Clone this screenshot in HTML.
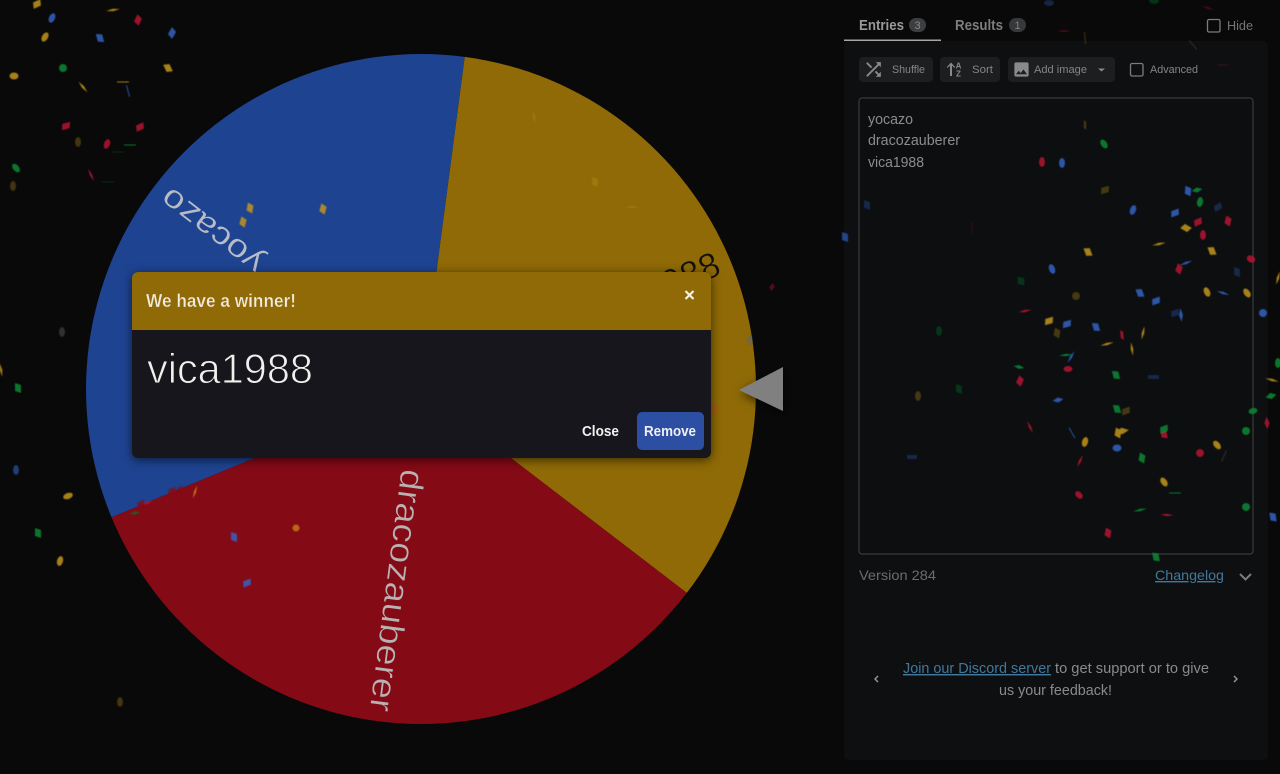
<!DOCTYPE html>
<html lang="en"><head><meta charset="utf-8"><title>Wheel winner</title>
<style>
html,body{margin:0;padding:0;background:#090909;width:1280px;height:774px;overflow:hidden}
svg{display:block;position:absolute;left:0;top:0}
text{font-family:"Liberation Sans",sans-serif}
</style></head><body>
<svg width="1280" height="774" viewBox="0 0 1280 774" xmlns="http://www.w3.org/2000/svg">
<defs>
<polygon id="p" points="-3,-5 3,-3 3,5 -3,3"/>
<ellipse id="e" rx="3" ry="5"/>
<circle id="c" r="4"/>
<polygon id="t" points="-7,0 0,-1.3 7,0 0,1.3"/>
<rect id="h" x="-6" y="-.5" width="12" height="1"/>
<filter id="sh" x="-10%" y="-10%" width="120%" height="125%"><feDropShadow dx="0" dy="2" stdDeviation="5" flood-color="#000" flood-opacity=".6"/></filter>
<filter id="ps" x="-50%" y="-50%" width="200%" height="200%"><feDropShadow dx="2" dy="3" stdDeviation="5" flood-color="#000" flood-opacity=".7"/></filter>
<filter id="soft" x="0" y="0" width="100%" height="100%"><feGaussianBlur stdDeviation=".45"/></filter>
</defs>
<rect width="1280" height="774" fill="#090909"/>
<!-- wheel -->
<path d="M421 389L464.7 56.9A335 335 0 0 1 686.8 592.9Z" fill="#8f6a06"/>
<path d="M421 389L686.8 592.9A335 335 0 0 1 111.5 517.2Z" fill="#840a16"/>
<path d="M421 389L111.5 517.2A335 335 0 0 1 464.7 56.9Z" fill="#1e4391"/>
<text transform="translate(421 389) rotate(97.5)" x="325" y="9" font-size="34" text-anchor="end" fill="#b8b2b2" stroke="#840a16" stroke-width=".5" textLength="244" lengthAdjust="spacingAndGlyphs">dracozauberer</text>
<text transform="translate(421 389) rotate(217.5)" x="322" y="8.500" font-size="32" text-anchor="end" fill="#b8bcc6" stroke="#1e4391" stroke-width=".3" textLength="120" lengthAdjust="spacingAndGlyphs">yocazo</text>
<text transform="translate(421 389) rotate(-22.5)" x="323" y="9" font-size="36" text-anchor="end" fill="#111" stroke="#8f6a06" stroke-width=".5" textLength="142" lengthAdjust="spacingAndGlyphs">vica1988</text>
<path d="M739 390L783 367V411Z" fill="#808080" filter="url(#ps)"/>
<!-- side panel -->
<rect x="844" y="41" width="424" height="719" rx="5" fill="#0d0f11"/>
<rect x="844" y="39.500" width="97" height="1.500" fill="#a8a8a8"/>
<g font-weight="700" font-size="14.500" fill="#8f8f8f">
<text x="859" y="30" textLength="45" lengthAdjust="spacingAndGlyphs" fill="#999">Entries</text>
<text x="955" y="30" textLength="48" lengthAdjust="spacingAndGlyphs" fill="#7e7e7e">Results</text>
</g>
<rect x="909" y="18" width="17" height="14" rx="7" fill="#3c3f41"/>
<rect x="1009" y="18" width="17" height="14" rx="7" fill="#36393b"/>
<text x="917.500" y="29" font-size="11" fill="#8a8a8a" text-anchor="middle">3</text>
<text x="1017.500" y="29" font-size="11" fill="#808080" text-anchor="middle">1</text>
<rect x="1207.500" y="19.500" width="12.500" height="12.500" rx="1.500" fill="none" stroke="#7c7c7c" stroke-width="1.300"/>
<text x="1227" y="30" font-size="13" fill="#767676" textLength="26" lengthAdjust="spacingAndGlyphs">Hide</text>
<!-- buttons -->
<rect x="859" y="57" width="74" height="25" rx="4" fill="#1c1e20"/>
<rect x="940" y="57" width="60" height="25" rx="4" fill="#1c1e20"/>
<rect x="1008" y="57" width="107" height="25" rx="4" fill="#1c1e20"/>
<g fill="#8a8a8a">
<svg x="862.500" y="58.500" width="22" height="22" viewBox="0 0 24 24"><path fill="#8a8a8a" d="M10.590 9.170L5.410 4 4 5.410l5.170 5.170 1.420-1.410zM14.500 4l2.040 2.040L4 18.590 5.410 20 17.960 7.460 20 9.500V4h-5.500zm.33 9.410l-1.410 1.410 3.130 3.130L14.500 20H20v-5.500l-2.040 2.040-3.130-3.130z"/></svg>
<path d="M950 76V65.500L947.500 68 947 67l4-4.500 4 4.500-.6 1-2.400-2.500V76z"/>
<text x="958.500" y="68.500" font-size="8" font-weight="700" text-anchor="middle">A</text>
<text x="958.500" y="76.500" font-size="8" font-weight="700" text-anchor="middle">Z</text>
<svg x="1012" y="60" width="19" height="19" viewBox="0 0 24 24"><path fill="#8a8a8a" d="M21 19V5c0-1.100-.9-2-2-2H5c-1.100 0-2 .9-2 2v14c0 1.100.9 2 2 2h14c1.100 0 2-.9 2-2zM8.500 13.500l2.500 3.010L14.500 12l4.500 6H5l3.500-4.500z"/></svg>
<path d="M1098 68.500h7l-3.500 3z"/>
</g>
<g font-size="11" fill="#858585">
<text x="892" y="73" textLength="33" lengthAdjust="spacingAndGlyphs">Shuffle</text>
<text x="972" y="73" textLength="21" lengthAdjust="spacingAndGlyphs">Sort</text>
<text x="1034" y="73" textLength="53" lengthAdjust="spacingAndGlyphs">Add image</text>
<text x="1150" y="73" textLength="48" lengthAdjust="spacingAndGlyphs">Advanced</text>
</g>
<rect x="1130.500" y="63.500" width="12.500" height="12.500" rx="1.500" fill="none" stroke="#7c7c7c" stroke-width="1.300"/>
<!-- textarea -->
<rect x="859" y="98" width="394" height="456" rx="3" fill="#0c0e10" stroke="#434446"/>
<g font-size="14.500" fill="#8c8c8c">
<text x="868" y="124" textLength="45" lengthAdjust="spacingAndGlyphs">yocazo</text>
<text x="868" y="145" textLength="92" lengthAdjust="spacingAndGlyphs">dracozauberer</text>
<text x="868" y="167" textLength="56" lengthAdjust="spacingAndGlyphs">vica1988</text>
</g>
<!-- footer -->
<text x="859" y="580" font-size="14" fill="#6c6c6c" textLength="77" lengthAdjust="spacingAndGlyphs">Version 284</text>
<text x="1155" y="580" font-size="14" fill="#42789c" textLength="69" lengthAdjust="spacingAndGlyphs" text-decoration="underline">Changelog</text>
<path d="M1240 574l5.500 5.500 5.500-5.500" fill="none" stroke="#7c7c7c" stroke-width="2"/>
<g font-size="14.500">
<text x="903" y="673" fill="#42789c" textLength="148" lengthAdjust="spacingAndGlyphs" text-decoration="underline">Join our Discord server</text>
<text x="1055" y="673" fill="#8a8a8a" textLength="154" lengthAdjust="spacingAndGlyphs">to get support or to give</text>
<text x="999" y="695" fill="#8a8a8a" textLength="113" lengthAdjust="spacingAndGlyphs">us your feedback!</text>
</g>
<path d="M878 676l-3 3 3 3M1234 676l3 3-3 3" fill="none" stroke="#9a9a9a" stroke-width="1.400"/>
<!-- confetti -->
<g filter="url(#soft)" opacity=".85">
<g fill="#c4961c">
<use href="#p" transform="translate(1186 228) rotate(-60)"/><use href="#t" transform="translate(1159 244) rotate(-12)"/><use href="#p" transform="translate(1212 251) rotate(-20)"/><use href="#p" transform="translate(1088 252) rotate(-20)"/><use href="#e" transform="translate(1207 292) rotate(-25)"/><use href="#e" transform="translate(1247 293) rotate(-35)"/><use href="#p" transform="translate(1049 321) rotate(75)"/><use href="#t" transform="translate(1143 333) rotate(-78)"/><use href="#t" transform="translate(1107 344) rotate(-14)"/><use href="#t" transform="translate(1132 349) rotate(82)"/><use href="#t" transform="translate(1278 278) rotate(-75)"/><use href="#t" transform="translate(1272 380) rotate(15)"/><use href="#e" transform="translate(1085 442) rotate(15)"/><use href="#t" transform="translate(1122 431) rotate(-8) scale(1 2.500)"/><use href="#p" transform="translate(1118 433) rotate(10)"/><use href="#e" transform="translate(1217 445) rotate(-40)"/><use href="#e" transform="translate(1164 482) rotate(-35)"/>
<use href="#p" transform="translate(37 4) rotate(65)"/><use href="#e" transform="translate(45 37) rotate(30)"/><use href="#t" transform="translate(113 10) rotate(-8)"/><use href="#p" transform="translate(168 68) rotate(-25)"/><ellipse cx="14" cy="76" rx="4.500" ry="3.500"/><use href="#t" transform="translate(83 87) rotate(50)"/><use href="#h" transform="translate(123 82)"/><use href="#p" transform="translate(250 208) rotate(10)"/><use href="#p" transform="translate(243 222) rotate(15)"/><use href="#p" transform="translate(323 209) rotate(15)"/><circle cx="296" cy="528" r="3.500" fill="#c47a18"/><use href="#t" transform="translate(195 492) rotate(-72)" fill="#c47a18"/><use href="#e" transform="translate(60 561) rotate(15)"/><use href="#e" transform="translate(68 496) rotate(70)"/><use href="#p" transform="translate(714 409) rotate(10)" fill="#a55a18"/><use href="#t" transform="translate(1 370) rotate(80)"/>
</g>
<g fill="#3563c4">
<use href="#p" transform="translate(1188 191) rotate(5)"/><use href="#e" transform="translate(1133 210) rotate(20)"/><use href="#p" transform="translate(1175 213) rotate(70)"/><use href="#t" transform="translate(1186 263) rotate(-20)"/><use href="#e" transform="translate(1052 269) rotate(-20)"/><use href="#p" transform="translate(1140 293) rotate(-20)"/><use href="#t" transform="translate(1223 293) rotate(18)"/><use href="#p" transform="translate(1156 301) rotate(70)"/><use href="#t" transform="translate(1181 315) rotate(85) scale(1 1.500)"/><use href="#c" x="1263" y="313"/><use href="#p" transform="translate(1067 324) rotate(75)"/><use href="#p" transform="translate(1096 327) rotate(-15)"/><use href="#t" transform="translate(1071 357) rotate(-60)"/><use href="#t" transform="translate(1058 400) rotate(-10) scale(.8 2)"/><use href="#h" transform="translate(1072 433) rotate(60)"/><ellipse cx="1117" cy="448" rx="4.500" ry="3.500"/><use href="#p" transform="translate(1273 517) rotate(-8)"/><use href="#e" transform="translate(1062 163)"/>
<use href="#e" transform="translate(52 18) rotate(25)"/><use href="#p" transform="translate(100 38) rotate(-15)"/><use href="#p" transform="translate(172 33) rotate(30)"/><use href="#h" transform="translate(128 91) rotate(75)"/><use href="#p" transform="translate(234 537)"/><use href="#p" transform="translate(247 583) rotate(70)"/><use href="#e" transform="translate(16 470)" opacity=".7"/><use href="#p" transform="translate(845 237)" opacity=".8"/>
</g>
<g fill="#b51430">
<use href="#p" transform="translate(1198 222) rotate(65)"/><use href="#p" transform="translate(1228 221) rotate(15)"/><use href="#e" transform="translate(1203 235)"/><ellipse cx="1251" cy="259" rx="4.500" ry="3.500" transform="rotate(30 1251 259)"/><use href="#p" transform="translate(1179 269) rotate(20)"/><use href="#t" transform="translate(1025 311) rotate(-10)"/><use href="#p" transform="translate(1122 335) rotate(-5) scale(.5 1)"/><ellipse cx="1068" cy="369" rx="4.500" ry="3"/><use href="#p" transform="translate(1020 381) rotate(25)"/><use href="#t" transform="translate(1267 423) rotate(85) scale(.9 2)"/><use href="#t" transform="translate(1030 427) rotate(65)"/><use href="#p" transform="translate(1164 434) rotate(-10)"/><use href="#c" x="1200" y="453"/><use href="#t" transform="translate(1080 461) rotate(-65)"/><ellipse cx="1079" cy="495" rx="4.500" ry="3" transform="rotate(45 1079 495)"/><use href="#t" transform="translate(1167 515) rotate(3)"/><use href="#p" transform="translate(1108 533) rotate(10)"/><use href="#e" transform="translate(1042 162)"/>
<use href="#p" transform="translate(138 20) rotate(25)"/><use href="#p" transform="translate(66 126) rotate(75)"/><use href="#p" transform="translate(140 127) rotate(65)"/><use href="#e" transform="translate(107 144) rotate(20)"/><use href="#t" transform="translate(91 175) rotate(65)"/><use href="#t" transform="translate(147 503) rotate(-20)"/><use href="#p" transform="translate(772 287) rotate(40) scale(.7)" opacity=".5"/>
<g fill="#840a16"><use href="#p" transform="translate(172 491) rotate(70) scale(.9)"/><use href="#p" transform="translate(141 504) rotate(60) scale(.9)"/><use href="#p" transform="translate(180 489) rotate(70) scale(.7)"/></g>
</g>
<g fill="#0b8a35">
<use href="#t" transform="translate(1197 190) rotate(-12) scale(.8 2)"/><use href="#e" transform="translate(1200 202) rotate(10)"/><use href="#t" transform="translate(1066 355) rotate(-5)"/><use href="#t" transform="translate(1019 367) rotate(12) scale(.8 1.500)"/><use href="#e" transform="translate(1278 363)"/><use href="#p" transform="translate(1116 375) rotate(-15)"/><use href="#t" transform="translate(1271 396) rotate(-15) scale(.8 2.500)"/><ellipse cx="1253" cy="411" rx="4.500" ry="3" transform="rotate(-15 1253 411)"/><use href="#p" transform="translate(1117 409) rotate(-15)"/><use href="#p" transform="translate(1164 429) rotate(70)" /><use href="#c" x="1246" y="431"/><use href="#p" transform="translate(1142 458) rotate(10)"/><use href="#h" transform="translate(1175 493)"/><use href="#t" transform="translate(1140 510) rotate(-12)"/><use href="#c" x="1246" y="507"/><use href="#p" transform="translate(1156 557) rotate(-10)"/><use href="#e" transform="translate(1104 144) rotate(-35)"/>
<use href="#c" x="63" y="68"/><use href="#h" transform="translate(130 145)"/><use href="#e" transform="translate(16 168) rotate(-40)"/><use href="#p" transform="translate(18 388)"/><use href="#p" transform="translate(38 533)"/><use href="#t" transform="translate(135 513) rotate(-10) scale(.8 1.500)" fill="#2b5a2b"/>
</g>
<g opacity=".38">
<g fill="#c4961c"><use href="#p" transform="translate(1105 190) rotate(75)"/><use href="#c" x="1076" y="296"/><use href="#p" transform="translate(1057 333) rotate(10)"/><use href="#e" x="918" y="396"/><use href="#p" transform="translate(1126 411) rotate(70)"/><use href="#h" transform="translate(1085 38) rotate(85)"/><use href="#p" transform="translate(1085 125) scale(.4 1)"/><use href="#p" x="595" y="182"/><use href="#t" x="632" y="207"/><use href="#t" transform="translate(534 117) rotate(80)"/><use href="#e" x="78" y="142"/><use href="#e" x="13" y="186"/><use href="#e" x="120" y="702"/></g>
<g fill="#3563c4"><use href="#p" transform="translate(1218 207) rotate(60)"/><use href="#p" x="1237" y="272"/><use href="#p" transform="translate(1175 313) rotate(70)"/><use href="#p" x="867" y="205"/><rect x="1148" y="375" width="11" height="4"/><rect x="907" y="455" width="10" height="4"/><ellipse cx="1049" cy="3" rx="5" ry="3"/><use href="#e" x="750" y="340"/></g>
<g fill="#b51430"><use href="#t" transform="translate(1208 8) rotate(15)"/><use href="#t" x="1064" y="31"/><use href="#h" x="1223" y="65"/><use href="#h" transform="translate(972 228) rotate(85)"/></g>
<g fill="#0b8a35"><use href="#p" transform="translate(1021 281) scale(1.100 .9)"/><use href="#e" x="939" y="331"/><use href="#p" x="959" y="389"/><ellipse cx="1154" cy="1" rx="5" ry="3"/><use href="#h" x="118" y="152"/><use href="#h" x="108" y="182"/></g>
<g fill="#888"><use href="#h" transform="translate(1193 45) rotate(50)"/><use href="#h" transform="translate(1224 456) rotate(-65)"/><use href="#e" x="62" y="332"/></g>
</g>
</g>
<!-- dialog -->
<g filter="url(#sh)"><rect x="132" y="272" width="579" height="186" rx="6" fill="#17191a"/></g>
<path d="M132 330V278a6 6 0 0 1 6-6H705a6 6 0 0 1 6 6V330Z" fill="#8f6a06"/>
<text x="146" y="307" font-size="18" font-weight="700" fill="#f0ebdd" stroke="#8f6a06" stroke-width=".3" textLength="150" lengthAdjust="spacingAndGlyphs">We have a winner!</text>
<path d="M685.500 291l8 8M693.500 291l-8 8" stroke="#f4f0e4" stroke-width="2.200" fill="none"/>
<text x="147" y="383" font-size="42" fill="#f0f0f0" stroke="#17191a" stroke-width="1" textLength="166" lengthAdjust="spacingAndGlyphs">vica1988</text>
<text x="582" y="436" font-size="14.500" font-weight="700" fill="#f2f2f2" textLength="37" lengthAdjust="spacingAndGlyphs">Close</text>
<rect x="637" y="412" width="67" height="38" rx="5" fill="#2c4ea3"/>
<text x="644" y="436" font-size="14.500" font-weight="700" fill="#f0f0f0" textLength="52" lengthAdjust="spacingAndGlyphs">Remove</text>
</svg>
</body></html>
